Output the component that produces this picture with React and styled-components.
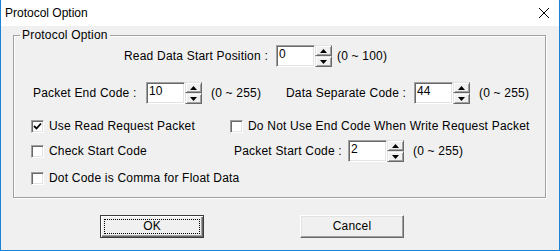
import styled, { createGlobalStyle } from 'styled-components'

const GlobalStyle = createGlobalStyle`
  html, body {
    margin: 0;
    padding: 0;
    background: #fff;
  }
  body {
    font-family: "Liberation Sans", Arial, sans-serif;
    font-size: 12px;
    color: #000;
  }
`

const Window = styled.div`
  width: 560px;
  height: 251px;
  box-sizing: border-box;
  border: 1px solid #1883d7;
  border-top: none;
  background: #f0f0f0;
  display: flex;
  flex-direction: column;
`

const TitleBar = styled.div`
  height: 26px;
  flex: none;
  background: #fff;
  display: flex;
  align-items: center;
  justify-content: space-between;
  padding: 0 10px 0 4px;
  font-size: 12px;
`

const Body = styled.div`
  padding: 2px 13px 0 12px;
  letter-spacing: 0.2px;
`

const Group = styled.fieldset`
  margin: 0;
  padding: 0;
  height: 170px;
  box-sizing: border-box;
  border: 1px solid #a0a0a0;
  box-shadow: inset 1px 1px 0 #fff, 1px 1px 0 #fff;
  min-width: 0;
`

const Legend = styled.legend`
  margin-left: 6px;
  padding: 0 2px;
  line-height: 14px;
  background: #f0f0f0;
`

const Row = styled.div`
  display: flex;
  align-items: center;
  height: 22px;
  margin-top: ${({ $top }) => $top}px;
  padding-left: ${({ $left }) => $left}px;
`

const Label = styled.span`
  width: ${({ $w }) => $w}px;
  flex: none;
  white-space: nowrap;
`

const Range = styled.span`
  width: ${({ $w }) => ($w ? `${$w}px` : 'auto')};
  margin-left: ${({ $gap }) => $gap}px;
  flex: none;
  white-space: nowrap;
`

const Spin = styled.div`
  display: flex;
  flex: none;
  height: 22px;
`

const Edit = styled.div`
  width: 39px;
  height: 22px;
  box-sizing: border-box;
  background: #fff;
  border-top: 1px solid #a0a0a0;
  border-left: 1px solid #a0a0a0;
  border-bottom: 1px solid #fff;
  border-right: 1px solid #fff;
  box-shadow: inset 1px 1px 0 #696969, inset -1px -1px 0 #e3e3e3;
  padding: 1px 0 0 2px;
  line-height: 14px;
  letter-spacing: 0;
`

const SpinButtons = styled.div`
  display: flex;
  flex-direction: column;
  width: 17px;
`

const SpinButton = styled.div`
  height: 11px;
  box-sizing: border-box;
  display: flex;
  align-items: center;
  justify-content: center;
  background: #f0f0f0;
  border-top: 1px solid #e3e3e3;
  border-left: 1px solid #e3e3e3;
  border-bottom: 1px solid #696969;
  border-right: 1px solid #696969;
  box-shadow: inset 1px 1px 0 #fff, inset -1px -1px 0 #a0a0a0;
`

const CheckItem = styled.label`
  display: flex;
  align-items: center;
  gap: 5px;
  width: ${({ $w }) => ($w ? `${$w}px` : 'auto')};
  flex: none;
  white-space: nowrap;
`

const CheckBox = styled.span`
  width: 13px;
  height: 13px;
  box-sizing: border-box;
  flex: none;
  background: #fff;
  border-top: 1px solid #a0a0a0;
  border-left: 1px solid #a0a0a0;
  border-bottom: 1px solid #fff;
  border-right: 1px solid #fff;
  box-shadow: inset 1px 1px 0 #696969, inset -1px -1px 0 #e3e3e3;
  display: flex;
  align-items: center;
  justify-content: center;
`

const ButtonRow = styled.div`
  display: flex;
  gap: 96px;
  margin-top: 17px;
  padding-left: 99px;
  letter-spacing: 0.2px;
`

const Button = styled.div`
  width: 104px;
  height: 23px;
  box-sizing: border-box;
  display: flex;
  background: #f0f0f0;
  border: 1px solid ${({ $default }) => ($default ? '#3c3c3c' : '#f0f0f0')};
  border-top-color: ${({ $default }) => ($default ? '#3c3c3c' : '#fff')};
  border-left-color: ${({ $default }) => ($default ? '#3c3c3c' : '#fff')};
  border-bottom-color: ${({ $default }) => ($default ? '#3c3c3c' : '#696969')};
  border-right-color: ${({ $default }) => ($default ? '#3c3c3c' : '#696969')};
  box-shadow: ${({ $default }) =>
    $default
      ? 'inset 1px 1px 0 #fff, inset -1px -1px 0 #696969, inset -2px -2px 0 #a0a0a0'
      : 'inset -1px -1px 0 #a0a0a0, inset 1px 1px 0 #e3e3e3'};
`

const FocusRect = styled.span`
  flex: 1;
  margin: 3px;
  display: flex;
  align-items: center;
  justify-content: center;
  border: 1px dotted ${({ $show }) => ($show ? '#000' : 'transparent')};
  line-height: 13px;
  font-size: 12px;
`

function Arrow({ up }) {
  return (
    <svg width="7" height="4" viewBox="0 0 7 4">
      <path d={up ? 'M0 4 L3.5 0 L7 4 Z' : 'M0 0 L3.5 4 L7 0 Z'} fill="#000" />
    </svg>
  )
}

function SpinEdit({ value }) {
  return (
    <Spin>
      <Edit>{value}</Edit>
      <SpinButtons>
        <SpinButton><Arrow up /></SpinButton>
        <SpinButton><Arrow /></SpinButton>
      </SpinButtons>
    </Spin>
  )
}

function Check({ checked, label, w }) {
  return (
    <CheckItem $w={w}>
      <CheckBox>
        {checked && (
          <svg width="9" height="9" viewBox="0 0 9 9">
            <polyline points="1,4 3.5,6.5 8,1.5" fill="none" stroke="#000" strokeWidth="1.8" />
          </svg>
        )}
      </CheckBox>
      {label}
    </CheckItem>
  )
}

export default function App() {
  return (
    <>
      <GlobalStyle />
      <Window>
        <TitleBar>
          <span>Protocol Option</span>
          <svg width="10" height="10" viewBox="0 0 10 10">
            <path d="M0 0 L10 10 M10 0 L0 10" stroke="#000" strokeWidth="1" />
          </svg>
        </TitleBar>
        <Body>
          <Group>
            <Legend>Protocol Option</Legend>
            <Row $top={3} $left={110}>
              <Label $w={152}>Read Data Start Position :</Label>
              <SpinEdit value="0" />
              <Range $gap={5}>(0 ~ 100)</Range>
            </Row>
            <Row $top={15} $left={19}>
              <Label $w={113}>Packet End Code :</Label>
              <SpinEdit value="10" />
              <Range $gap={9} $w={75}>(0 ~ 255)</Range>
              <Label $w={128}>Data Separate Code :</Label>
              <SpinEdit value="44" />
              <Range $gap={9}>(0 ~ 255)</Range>
            </Row>
            <Row $top={11} $left={17}>
              <Check checked w={199} label="Use Read Request Packet" />
              <Check label="Do Not Use End Code When Write Request Packet" />
            </Row>
            <Row $top={3} $left={17}>
              <Check w={203} label="Check Start Code" />
              <Label $w={114}>Packet Start Code :</Label>
              <SpinEdit value="2" />
              <Range $gap={9}>(0 ~ 255)</Range>
            </Row>
            <Row $top={5} $left={17}>
              <Check label="Dot Code is Comma for Float Data" />
            </Row>
          </Group>
        </Body>
        <ButtonRow>
          <Button $default>
            <FocusRect $show>OK</FocusRect>
          </Button>
          <Button>
            <FocusRect>Cancel</FocusRect>
          </Button>
        </ButtonRow>
      </Window>
    </>
  )
}
